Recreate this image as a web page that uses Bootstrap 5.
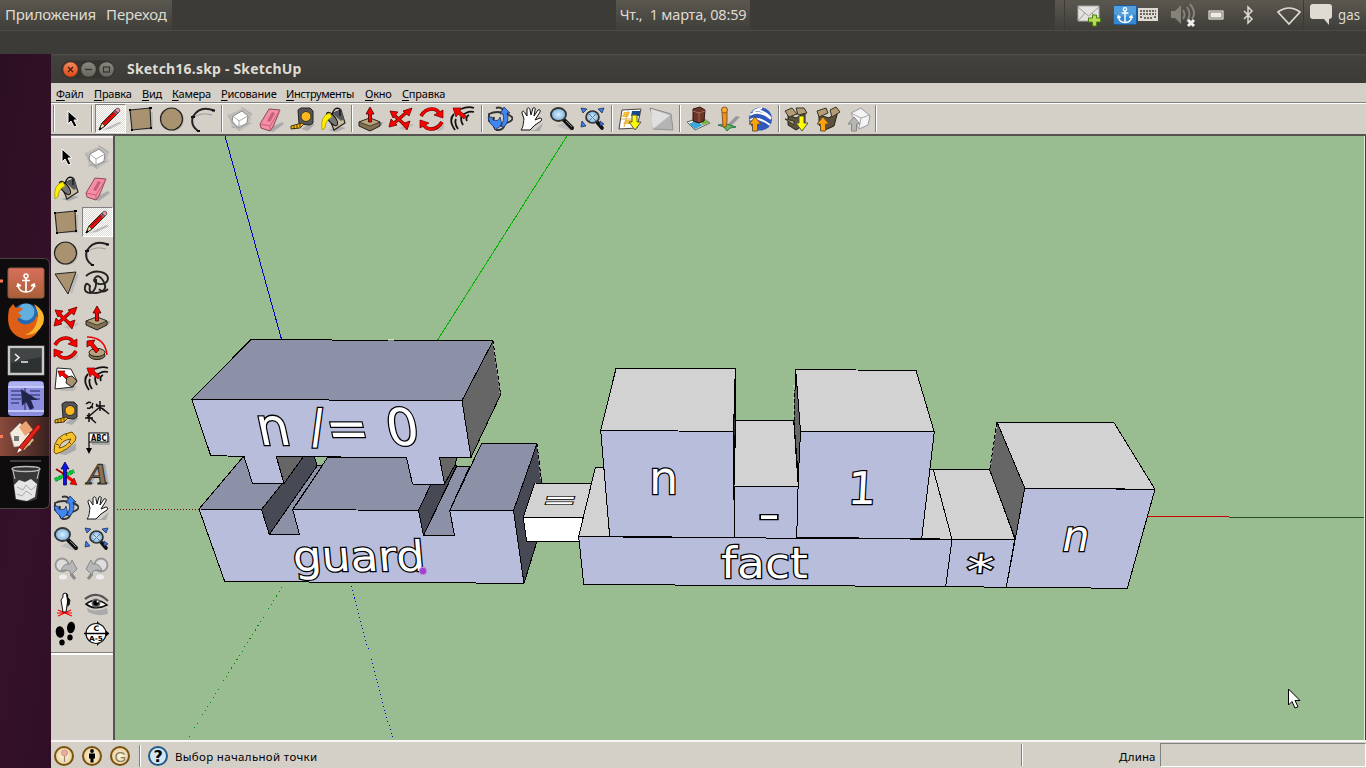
<!DOCTYPE html>
<html lang="ru">
<head>
<meta charset="utf-8">
<title>Sketch16.skp - SketchUp</title>
<link href="https://cdn.jsdelivr.net/npm/bootstrap@5.3.0/dist/css/bootstrap.min.css" rel="stylesheet">
<script src="https://cdn.jsdelivr.net/npm/bootstrap@5.3.0/dist/js/bootstrap.bundle.min.js" defer></script>
<style>
body{width:1366px;height:768px;overflow:hidden;background:#3c3b37;font-family:"Noto Sans","Open Sans",sans-serif;cursor:default}
svg{display:block;flex:none}
.panel{height:31px;background:#3c3b37;border-bottom:1px solid #4d4b46;color:#dfdbd2;font-size:15px;line-height:28px;white-space:nowrap}
.lit{background:linear-gradient(#57544c,#5a574f 5%,#403f3a 95%);height:30px}
.gapband{height:23px;background:#3c3b37}
.dockcol{width:51px;background:linear-gradient(100deg,#2c0f22,#35112a 60%,#300f26);padding-top:204px}
.dock{width:50px;height:251px;background:#0e0c0d;border:1px solid #4a4447;border-left:0;border-radius:0 6px 6px 0}
.titlebar{height:29px;background:linear-gradient(#504f4a,#42413d 8%,#3c3b37);color:#dfdbd2;font-weight:700;font-size:14px}
.menus{height:19px;background:#d4d0c8;font-size:11px;color:#000;line-height:22px;white-space:nowrap}
.menus span{flex:none;letter-spacing:-.2px}
.menus u{text-underline-offset:2px}
.tools{height:34px;background:#d4d0c8;border-top:1px solid #808080;border-bottom:2px solid #55534f;box-shadow:inset 0 1px #fff}
.cell{width:31px;height:30.5px;display:flex;align-items:center;justify-content:center;flex:none}
.cell svg{margin-left:-2px}
.pressed{background:repeating-conic-gradient(#fff 0 25%,#dcd9d2 0 50%) 0 0/2px 2px;border:1px solid;border-color:#808080 #fff #fff #808080;height:29px}
.grp .pressed{height:30px}
.vsep{width:2px;height:27px;margin:0 2px;border-left:1px solid #808080;border-right:1px solid #fff;flex:none}
.side{width:64px;background:#d4d0c8;border-right:2px solid #55534f}
.sidebox{height:519px;border-top:2px solid #f4f2ee;border-bottom:2px solid #fff;box-shadow:0 -1px #808080,inset 0 -1px #808080;padding:4px 0 0;gap:3.9px}
.grp{display:grid;grid-template-columns:31px 31px}
.status{height:28px;background:#d4d0c8;border-top:2px solid #f7f6f4;font-size:11.5px;color:#000}
.field{width:206px;height:24px;border:1px solid;border-color:#808080 #fff #fff #808080}
</style>
</head>
<body class="d-flex flex-column">
<svg width="0" height="0" class="position-absolute">
<defs>
<linearGradient id="gOr" x2="0" y2="1"><stop stop-color="#f58a63"/><stop offset="1" stop-color="#dd4814"/></linearGradient>
<linearGradient id="gGr" x2="0" y2="1"><stop stop-color="#8b8881"/><stop offset="1" stop-color="#67655e"/></linearGradient>
<radialGradient id="gLens"><stop stop-color="#d9efff"/><stop offset="1" stop-color="#79b1dc"/></radialGradient>
<radialGradient id="gCoin"><stop stop-color="#fff8e0"/><stop offset="1" stop-color="#e8cf9a"/></radialGradient>
<symbol id="arrow" viewBox="0 0 26 26"><path d="M9 5v13l3-3 3 6 3-1-3-6h4z" fill="#000" stroke="#fff" stroke-width="1"/></symbol>
<symbol id="pencil" viewBox="0 0 26 26"><path d="M5 24L22 16l3 1-12 6z" fill="#aaa" opacity=".7"/><path d="M2 24l3-7L19 3l3 3L8 20z" fill="#e8120c" stroke="#222"/><path d="M7 17L20 4" stroke="#900" stroke-width="1"/><path d="M2 24l3-7 3 3z" fill="#f3dc9b" stroke="#222" stroke-width=".8"/><path d="M2 24l1-3 2 2z" fill="#000"/><path d="M18 4l2-2q3 0 3 3l-2 2z" fill="#f28ca6" stroke="#555" stroke-width=".8"/><path d="M17 5l3 3" stroke="#779" stroke-width="1.500"/></symbol>
<symbol id="square" viewBox="0 0 26 26"><path d="M5 5l20 1v18H7z" fill="#bbb"/><path d="M2 4l20-2 1 20-19 2z" fill="#a8926f" stroke="#222" stroke-width="1.1"/><path d="M1 4h2M21 2h3M22 22h2M3 24h2" stroke="#000" stroke-width="2"/></symbol>
<symbol id="circle" viewBox="0 0 26 26"><circle cx="14" cy="14" r="11" fill="#b8b5ae"/><circle cx="12.500" cy="13" r="11" fill="#a8926f" stroke="#222" stroke-width="1.2"/></symbol>
<symbol id="arc" viewBox="0 0 26 26"><path d="M8 25Q0 19 3 10.500 10-1 24 4.500" fill="none" stroke="#222" stroke-width="2"/><path d="M4 11q8-5 18-2" fill="none" stroke="#999"/><path d="M1 11h4M22 4.500h3M7 25h3" stroke="#111" stroke-width="2"/></symbol>
<symbol id="tri" viewBox="0 0 26 26"><path d="M6 6l20-2-7 20z" fill="#bbb"/><path d="M2 4l21-2-8 22z" fill="#a8926f" stroke="#222"/></symbol>
<symbol id="free" viewBox="0 0 26 26"><path d="M2 6Q10-1 20 3c7 4 4 12-5 11q-7-2-4-6t7 1 3 9-9 5-6-7q-4-5-5 1t6 6q6-3 5-14M15 19q4 5 9 0" fill="none" stroke="#222" stroke-width="1.900"/></symbol>
<symbol id="comp" viewBox="0 0 26 26"><path d="M1 9L16 2l9 5-3 12-9 6-8-4z" fill="#aaa" opacity=".5"/><path d="M6 10l9-5 6 5-1 7-8 5-7-6z" fill="#fff" stroke="#888"/><path d="M6 10l6 5 9-5M12 15v7" fill="none" stroke="#aaa"/><path d="M1 9l12 16M4 22L25 17M14 1l11 8" stroke="#999" stroke-width=".6"/></symbol>
<symbol id="eraser" viewBox="0 0 26 26"><path d="M8 24l16-8 2 2-11 8z" fill="#aaa"/><path d="M2 18L11 3l11 1-7 17-3 4-9-3z" fill="#f58ea6" stroke="#8b4a58"/><path d="M2 18l10 2L22 4M12 20v4" fill="none" stroke="#c86078"/><path d="M9 15l5-9 3 1-5 9z" fill="#a8435a" opacity=".6"/></symbol>
<symbol id="tape" viewBox="0 0 26 26"><path d="M12 23l8-5h6l-7 7z" fill="#aaa"/><path d="M9 4l3-2h9l3 3v12l-3 2-11-1z" fill="#555" stroke="#222"/><circle cx="17" cy="10.500" r="5" fill="#fbb81b" stroke="#333"/><path d="M13 17L2 20v3l9-1 4-4z" fill="#f8b91d" stroke="#443300"/><path d="M5 20v3M8 19v3M11 18v3" stroke="#000" stroke-width=".7"/></symbol>
<symbol id="bucket" viewBox="0 0 26 26"><path d="M8 24l14-3 4 1-10 4z" fill="#aaa"/><path d="M8 9l13-5 4 13-11 7z" fill="#c9bd9e" stroke="#222" stroke-width="1.200"/><path d="M12 7l9-3 3 9-3 2z" fill="#55585c"/><ellipse cx="12" cy="13" rx="3.500" ry="8" transform="rotate(-38 12 13)" fill="#777" stroke="#111"/><path d="M10 7Q0 9 2 24l3-2q0-8 7-11z" fill="#fff000" stroke="#a59500" stroke-width=".8"/><path d="M12 9q2-9 8-6v7" fill="none" stroke="#111" stroke-width="1.300"/></symbol>
<symbol id="push" viewBox="0 0 26 26"><path d="M13 25l12-6 1-3-5 1z" fill="#999"/><path d="M2 16l11-4 10 4v4l-10 5-11-5z" fill="#82704f" stroke="#222"/><path d="M2 16l11 4 10-4-10-4z" fill="#b7a47e" stroke="#222" stroke-width=".7"/><path d="M13 1l4 7h-2.500v8h-3V8H9z" fill="#f00" stroke="#400" stroke-width=".8"/></symbol>
<symbol id="move" viewBox="0 0 26 26"><path d="M10 22l14-4 2 1-10 5z" fill="#aaa" opacity=".6"/><path d="M5 8l13 12M20 5L4 19" stroke="#600" stroke-width="3.400"/><path d="M2 5l8 1-5 6zM24 2l-3 8-6-5zM1 21l2-8 6 6zM19 24l-5-6 8-3z" fill="#f00" stroke="#600" stroke-width=".8"/><path d="M5 8l13 12M20 5L4 19" stroke="#f00" stroke-width="2"/></symbol>
<symbol id="rot" viewBox="0 0 26 26"><path d="M6 25h12l7-7v4l-4 3z" fill="#aaa" opacity=".6"/><g id="rh"><path d="M2 10Q6 3 13 3q6 0 8 6" fill="none" stroke="#600" stroke-width="3.600"/><path d="M15 9l9-5v8z" fill="#f00" stroke="#600" stroke-width=".7"/><path d="M2 10Q6 3 13 3q6 0 8 6" fill="none" stroke="#f00" stroke-width="2.400"/></g><use href="#rh" transform="rotate(180 12.500 13)"/></symbol>
<symbol id="offset" viewBox="0 0 26 26"><path d="M5 24Q-2 14 4 8M13 19Q8 10 16 7q4-2 8-1M11 3q7-3 13-1M8 23q-4-6-2-10M17 15q-2-4 2-6" fill="none" stroke="#111" stroke-width="1.800"/><path d="M3 2l8 0-1 3 6 5-2 3-6-5-2 3z" fill="#f00" stroke="#600" stroke-width=".7"/></symbol>
<symbol id="orbit" viewBox="0 0 26 26"><path d="M9 2q8-3 9 10t-8 12Q5 22 7 11M2 8q8-4 18 0t2 8q-10 5-20-1z" fill="none" stroke="#333" stroke-width="1.900"/><path d="M1 11l4 0 1 3q6 2 7-3l2 8-7 5-1-3q-5-3-6-10zM17 1l6 6h-3q3 8-3 14l-4-1q5-5 3-12h-3z" fill="#3f86f2" stroke="#124" stroke-width=".7"/></symbol>
<symbol id="hand" viewBox="0 0 26 26"><path d="M9 25l8-1 8-7-3 8z" fill="#aaa"/><path d="M3 24c3-4 2-7 3-11l-2-6c0-3 2-2 3 0l2 3V3c1-2 3-1 3 1l1 5 2-7c1-1 3 0 2 2l-1 6 4-6c1-1 3 0 2 2l-5 8 5-2c2 0 2 2 1 3l-6 4-5 5z" fill="#fff" stroke="#111"/></symbol>
<symbol id="zoomi" viewBox="0 0 26 26"><path d="M8 20l14 5 3-2-12-6z" fill="#bbb"/><path d="M15 14l8 8" stroke="#111" stroke-width="4" stroke-linecap="round"/><path d="M17 15l6 6" stroke="#888" stroke-width="1"/><ellipse cx="9.500" cy="8.500" rx="7.500" ry="6.500" fill="url(#gLens)" stroke="#333" stroke-width="1.900"/></symbol>
<symbol id="zext" viewBox="0 0 26 26"><path d="M17 16l5 6" stroke="#111" stroke-width="3.600" stroke-linecap="round"/><ellipse cx="12.500" cy="11" rx="6.500" ry="6" fill="url(#gLens)" stroke="#333" stroke-width="1.700"/><path d="M9 8l7 7M16 8l-7 7" stroke="#678"/><path d="M1 2l6 1-4 4zM24 2l-6 1 4 4zM1 21l5-1-4-5zM24 18l-4-3v5z" fill="#3f7be8" stroke="#124" stroke-width=".7"/></symbol>
<symbol id="map" viewBox="0 0 26 26"><path d="M5 4l19-1-4 19-18 1z" fill="#fff" stroke="#444"/><path d="M7 6h6l-2 5H5zM9 14h6v4H6z" fill="#f6bd38"/><path d="M11 5l-4 16M4 13h16" stroke="#ddb04e"/><path d="M15 5h8v5h-9z" fill="#174a8c"/><path d="M15 9h5v7h4l-6 8-6-8h3z" fill="#ff0" stroke="#555"/></symbol>
<symbol id="terrain" viewBox="0 0 26 26"><path d="M2 2l21 6 2 16-20-1q2-8-3-21z" fill="#c5c5c5" stroke="#888"/><path d="M3 3l20 7-18 13z" fill="#e0e0e0"/><path d="M23 8L5 23l20 1z" fill="#a9a9a9" opacity=".6"/></symbol>
<symbol id="bld" viewBox="0 0 26 26"><path d="M2 16l14-5 9 6-15 7z" fill="#e7e4dc" stroke="#666"/><path d="M4 18l6-3 8 4-8 4z" fill="#3aa9d8"/><path d="M15 15l6-2 3 4-6 2z" fill="#74b743"/><path d="M8 3l7-2 5 3-1 11-5 2-6-2z" fill="#6b3528" stroke="#311"/><path d="M14 6v10M8 5l6 2 6-2" stroke="#a76853" fill="none"/></symbol>
<symbol id="person" viewBox="0 0 26 26"><path d="M11 19l9-9 4 1-9 9z" fill="#999"/><path d="M2 19l9-1 9 3-6 1-3 3-3-4z" fill="#69b84e" stroke="#275"/><path d="M6 6h5v9l-1 6H7z" fill="#f39411" stroke="#853"/><circle cx="8.500" cy="4" r="3" fill="#ffa928" stroke="#853"/></symbol>
<symbol id="earth" viewBox="0 0 26 26"><circle cx="13.500" cy="13" r="11.500" fill="#3159bd"/><path d="M3 9q9-6 21 4M3 14q8-4 20 5M8 4q9 0 16 8M6 6q4-3 9-4" fill="none" stroke="#fff" stroke-width="1.900"/><path d="M8 11l6 7h-3.500v7h-5v-7H2z" fill="#ffa20a" stroke="#653"/></symbol>
<symbol id="boxdn" viewBox="0 0 26 26"><path d="M4 9l8 3 9-5v11l-9 6-8-5z" fill="#5c513c" stroke="#221"/><path d="M1 5l7-3 5 6-8 3zM12 2l8 0 3 5-9 2zM1 13l9 2v4z" fill="#b49c77" stroke="#332"/><path d="M15 10h5v7h4l-6 8-6-8h3z" fill="#ff0" stroke="#554"/></symbol>
<symbol id="boxup" viewBox="0 0 26 26"><path d="M4 9l10 3 9-7-4 15-9 4-6-5z" fill="#5c513c" stroke="#221"/><path d="M2 5l9-3 2 5-9 4zM15 4l6-3 4 5-8 5z" fill="#b49c77" stroke="#332"/><path d="M8 11l6 7h-3.500v7h-5v-7H2z" fill="#ffa20a" stroke="#653"/></symbol>
<symbol id="share" viewBox="0 0 26 26"><path d="M5 7l10-5 9 8-2 9-9 4z" fill="#f4f4f4" stroke="#999"/><path d="M5 7l10 5 9-3M15 12l-2 10" fill="none" stroke="#aaa"/><path d="M8 11l6 7h-3.500v7h-5v-7H2z" fill="#b5b5b5" stroke="#888"/></symbol>
<symbol id="follow" viewBox="0 0 26 26"><path d="M3 2q18 0 20 18" fill="none" stroke="#e00" stroke-width="1.500"/><ellipse cx="13" cy="20.500" rx="8" ry="4" fill="#82704f" stroke="#222"/><ellipse cx="13" cy="17.500" rx="8" ry="4" fill="#b7a47e" stroke="#222"/><path d="M3 6l8-1-2 3 6 7-3 3-6-8-3 2z" fill="#f00" stroke="#500" stroke-width=".8"/></symbol>
<symbol id="scale" viewBox="0 0 26 26"><path d="M5 22l19-2-3 5H8z" fill="#aaa" opacity=".6"/><path d="M4 2l14 1 6 12-4 6-18 2z" fill="#fff" stroke="#222"/><path d="M14 11l5-1 5 5-5 6-6-4z" fill="#a8926f" stroke="#222"/><path d="M5 5h7l-1 2 4 3-2 3-4-4-2 2z" fill="#f00" stroke="#600" stroke-width=".7"/></symbol>
<symbol id="dims" viewBox="0 0 26 26"><path d="M3 18L17 6M3 15l9 8M5 13l0 9M1 18h8M12 4l9 7M16 1v10M12 6h9M18 8l7 6" stroke="#111" stroke-width="1.500" fill="none"/><path d="M2 4q3-3 5-1M3 8q4 1 4-2M9 3q-2 4 0 5" fill="none" stroke="#111" stroke-width="1.500"/></symbol>
<symbol id="prot" viewBox="0 0 26 26"><path d="M6 24l17-11v7l-10 5z" fill="#aaa"/><path d="M1 22Q0 5 19 2l4 5-1 4Q15 20 3 24zM6 18q8-1 12-9-10 1-12 9z" fill="#f7c129" fill-rule="evenodd" stroke="#6b4c00"/><path d="M3 14l3 1M7 8l2 2M13 4l1 2M18 14l-2-2" stroke="#6b4c00"/></symbol>
<symbol id="abc" viewBox="0 0 26 26"><path d="M8 13h17V6h1v9H8z" fill="#aaa"/><path d="M5 22V3h19v9H5" fill="#fff" stroke="#000" stroke-width="1.200"/><path d="M2 18h6l-3 6z"/><text x="7" y="10.500" font-family="DejaVu Sans" font-size="8" font-weight="700" textLength="15.500" lengthAdjust="spacingAndGlyphs">ABC</text></symbol>
<symbol id="axes" viewBox="0 0 26 26"><path d="M12 14l8 6" stroke="#f00" stroke-width="3"/><path d="M24 24l-7-1 4-6z" fill="#f00" stroke="#600" stroke-width=".6"/><path d="M2 19L21 10" stroke="#063" stroke-width="4" stroke-dasharray="3 1"/><path d="M2 19L21 10" stroke="#0c3" stroke-width="2.500"/><path d="M3 8l8 5" stroke="#a00" stroke-width="2"/><path d="M12 1l4 7h-2.500v16h-3V8H8z" fill="#11e" stroke="#003" stroke-width=".7"/></symbol>
<symbol id="text3d" viewBox="0 0 26 26"><g transform="skewX(-12)"><text x="9" y="23" font-family="Liberation Serif" font-size="30" font-weight="700" fill="#aaa">A</text><text x="6" y="23" font-family="Liberation Serif" font-size="30" font-weight="700" fill="#8a7350" stroke="#222" stroke-width=".9">A</text></g></symbol>
<symbol id="zprev" viewBox="0 0 26 26"><circle cx="9" cy="9" r="6.500" fill="#ddd" stroke="#999" stroke-width="2"/><path d="M8 15q2-8 9-7l2-4 5 9-6 6-1-4q-5-2-9 0z" fill="#b7b7b7" stroke="#888"/><path d="M18 18l4 5" stroke="#888" stroke-width="3"/><ellipse cx="10" cy="21" rx="4" ry="2.500" fill="#eee"/></symbol>
<symbol id="pos" viewBox="0 0 26 26"><path d="M5 25l13-6M5 19l14 6M4 22h15" stroke="#f00" stroke-width="1.200"/><path d="M12 2q3 0 2 4l3 3-1 5-2 1-1 6h-3l-1-6-1-6 2-3q-1-4 2-4z" fill="#fff" stroke="#111"/><path d="M13 2q3 1 2 4l2 3-1 5-2 1-1 5 1-10z" fill="#111"/></symbol>
<symbol id="eye" viewBox="0 0 26 26"><path d="M3 17q8 5 20 0l1 6q-11 3-20-2z" fill="#aaa"/><path d="M1 8q12-9 23 2" fill="none" stroke="#555" stroke-width="2.200"/><path d="M2 13q10-8 21 1-12 6-21-1z" fill="#fff" stroke="#111" stroke-width="1.600"/><circle cx="12" cy="12" r="4.500" fill="#666"/><circle cx="12" cy="12" r="2.800"/><circle cx="13.500" cy="10.500" r="1" fill="#fff"/></symbol>
<symbol id="feet" viewBox="0 0 26 26"><ellipse cx="7" cy="11" rx="4.300" ry="5.800" transform="rotate(-8 7 11)"/><ellipse cx="18" cy="6.500" rx="4" ry="5.800" transform="rotate(8 18 6.500)"/><ellipse cx="9" cy="21.500" rx="2.700" ry="3"/><ellipse cx="17" cy="16.500" rx="2.700" ry="3"/></symbol>
<symbol id="sect" viewBox="0 0 26 26"><path d="M13 0l12 12.500L13 25z"/><circle cx="12" cy="12.500" r="10" fill="#fff" stroke="#111" stroke-width="1.200"/><path d="M0 12.500h25" stroke="#000" stroke-width="1.500"/><text x="9.500" y="10" font-family="DejaVu Sans" font-size="7.500" font-weight="700">C</text><text x="5" y="20" font-family="DejaVu Sans" font-size="7" font-weight="700" textLength="14" lengthAdjust="spacingAndGlyphs">A-5</text></symbol>
<symbol id="anch" viewBox="0 0 24 24"><path d="M12 7v14M8 9.500h8M4 14q1 7 8 7t8-7M3 16l1-3 3 2M21 16l-1-3-3 2" fill="none" stroke="#fff" stroke-width="1.700"/><circle cx="12" cy="5" r="2" fill="none" stroke="#fff" stroke-width="1.500"/></symbol>
</defs></svg>

<header class="panel d-flex">
  <nav class="lit d-flex" style="width:172px"><span style="margin-left:5px;width:101px;letter-spacing:-.25px">Приложения</span><span style="letter-spacing:-.1px">Переход</span></nav>
  <div class="lit text-center" style="width:134px;margin-left:444px;font-size:14.500px;letter-spacing:-.2px;white-space:pre">Чт.,  1 марта, 08:59</div>
  <div style="width:305px"></div>
  <div class="lit d-flex flex-grow-1">
    <svg width="311" height="30" viewBox="1055 0 311 30">
      <path d="M1064.500 0v30" stroke="#3c3b37"/>
      <path d="M1078 6h21v15h-21z" fill="#e5e3df" stroke="#aaa"/><path d="M1078 7l10.500 9L1099 7M1078 21l7-8M1099 21l-7-8" fill="none" stroke="#999"/><path d="M1092 15h4v3h4v4h-4v4h-4v-4h-4v-4h4z" fill="#b8dd55" stroke="#4d7d12" transform="translate(.5 0)"/>
      <rect x="1113.500" y="5.500" width="23" height="19" rx="1" fill="#3587cf" stroke="#1c5a9c"/><path d="M1114 6h22v8q-11 6-22 0z" fill="#70b5ea" opacity=".5"/><use href="#anch" x="1115" y="5" width="20" height="20"/>
      <rect x="1138" y="8" width="20" height="13" fill="#dfdbd2"/><path d="M1140 11h16M1140 14h16M1140 17h2M1144 18h8M1154 17h2" stroke="#45443f" stroke-width="1.700" stroke-dasharray="2 1"/>
      <path d="M1171 11h4l6-6v19l-6-6h-4z" fill="#85827a"/><path d="M1183 10q3 5 0 9M1187 7q5 7 0 14M1190 4q7 8 2 15" stroke="#85827a" stroke-width="2" fill="none"/><path d="M1188 20l6 6M1194 20l-6 6" stroke="#eee" stroke-width="3"/>
      <rect x="1208.500" y="10.500" width="15" height="9" rx="1" fill="#dfdbd2" stroke="#a9a69e"/><path d="M1210 12h12v6h-12z" fill="#eeeae2" stroke="#55534c" stroke-width=".7"/>
      <path d="M1244 11l8 8-4 4V7l4 4-8 8" fill="none" stroke="#dfdbd2" stroke-width="1.500"/>
      <path d="M1278 12q11-8 22 0l-11 12z" fill="none" stroke="#dfdbd2" stroke-width="1.600"/>
      <path d="M1313 4h16q3 0 3 3v9q0 3-3 3v6l-5-6h-11q-3 0-3-3V7q0-3 3-3z" fill="#dfdbd2"/>
      <path d="M1303.500 0v30" stroke="#3c3b37"/>
      <text x="1338" y="20" font-size="15" fill="#dfdbd2" textLength="22" lengthAdjust="spacingAndGlyphs">gas</text>
    </svg>
  </div>
</header>
<div class="gapband"></div>
<main class="d-flex flex-grow-1">
  <aside class="dockcol flex-shrink-0"><div class="dock">
    <svg width="49" height="249" viewBox="0 259 49 249">
      <defs><linearGradient id="gAn" x2="0" y2="1"><stop stop-color="#d96f5d"/><stop offset="1" stop-color="#a96037"/></linearGradient><linearGradient id="gSk"><stop stop-color="#8a4b3c"/><stop offset="1" stop-color="#38221f"/></linearGradient></defs>
      <rect x="8" y="268" width="36" height="30" rx="2" fill="url(#gAn)" stroke="#8d5b42"/><use href="#anch" x="14" y="271" width="24" height="24"/>
      <path d="M0 279.500h3v3H0z" fill="#ff7c55"/>
      <circle cx="26" cy="318.500" r="15" fill="#2468b4"/><circle cx="26" cy="312" r="8.500" fill="#6fc0ea" opacity=".8"/><path d="M9 309l4-5 3 4q5-2 7 1l-5 4 4 3-5 3q4 7 11 5 7-2 8-8 5 2 5 6-3 17-17 17Q4 334 9 309z" fill="#e05f16"/><path d="M34 304q13 8 9 20-6 12-18 11 10-4 12-14 3-8-3-17z" fill="#f9b52b"/>
      <rect x="9" y="347" width="34" height="27" fill="#2e3131" stroke="#c8c8c8" stroke-width="2.500"/><path d="M11 349h30v8l-30 6z" fill="#4b4e4e" opacity=".7"/><path d="M15 354l4 3.500-4 3.500M21 362h7" fill="none" stroke="#eee" stroke-width="1.600"/>
      <rect x="8" y="381" width="36" height="35" rx="4" fill="#8b8ddf"/><path d="M8 387h36M8 411h36" stroke="#c6c8f5" stroke-width="2"/><path d="M25 388v22M11 391h10M11 395h10M11 399h10M11 403h8M30 391h10M30 395h10M34 399h6" stroke="#464889" stroke-width="1.500"/><path d="M21 389l1 17 4-4 4 8 4-2-3-8h7z" fill="#22244b"/><path d="M9 382h34v4H9z" fill="#aeb0ef"/>
      <rect x="0" y="417" width="49" height="39" fill="url(#gSk)"/><path d="M0 435h3v3H0z" fill="#ff7c55"/><path d="M10 433l10-10 12 13-2 9-16 2z" fill="#f4eadd" stroke="#999" stroke-width=".6"/><path d="M19 427l7-6 7 9-8 6z" fill="#eda274"/><path d="M14 436h5v5h-5z" fill="#777"/><path d="M23 449l10-10" stroke="#d9b27d" stroke-width="3"/><path d="M17 453l3-7 18-22 3 3-18 22z" fill="#e02218" stroke="#711"/><path d="M17 453l2-5 3 2z" fill="#fff"/>
      <path d="M10 461h31" stroke="#777"/>
      <path d="M12 469l3 30q11 5 22 0l3-30z" fill="#6e7170" opacity=".45"/><ellipse cx="26" cy="469" rx="14" ry="2.500" fill="#333" stroke="#bbb" stroke-width="1.300"/><path d="M14 485l5-5 6 2 6-3 6 5-2 13-8 4-11-2z" fill="#e5e5e5"/><path d="M17 487l6 3 3-5 5 5 5-4M17 494l5 2 4-5 6 4" stroke="#aaa" fill="none"/><path d="M13 471l2 8M39 471l-2 8" stroke="#ccc"/>
    </svg></div></aside>
  <section class="d-flex flex-column flex-grow-1">
    <div class="titlebar d-flex align-items-center">
      <svg width="76" height="28" viewBox="51 54 76 28"><rect x="61" y="59.500" width="54" height="18" rx="9" fill="#35342f"/><circle cx="70.500" cy="68.500" r="7.500" fill="url(#gOr)" stroke="#7a2d12" stroke-width=".6"/><path d="M68 66l5 5M73 66l-5 5" stroke="#4b1b0b" stroke-width="1.300"/><circle cx="88.500" cy="68.500" r="7.300" fill="url(#gGr)"/><path d="M85 68.500h7" stroke="#35342f" stroke-width="1.300"/><circle cx="106.500" cy="68.500" r="7.300" fill="url(#gGr)"/><rect x="103.500" y="66" width="6" height="5" fill="none" stroke="#35342f" stroke-width="1.200"/></svg>
      <span style="letter-spacing:.2px">Sketch16.skp - SketchUp</span>
    </div>
    <div class="menus d-flex">
      <span style="margin-left:5px;width:38px"><u>Ф</u>айл</span><span style="width:48px"><u>П</u>равка</span><span style="width:30px"><u>В</u>ид</span><span style="width:49px"><u>К</u>амера</span><span style="width:65px"><u>Р</u>исование</span><span style="width:79px;letter-spacing:-.4px"><u>И</u>нструменты</span><span style="width:37px"><u>О</u>кно</span><span><u>С</u>правка</span>
    </div>
    <div class="tools d-flex align-items-center">
      <div class="vsep" style="margin:0 0 0 2px"></div><div class="cell" style="margin-left:2px"><svg width="26" height="26"><use href="#arrow"/></svg></div>
      <div class="vsep" style="margin:0 2px 0 3px"></div>
      <div class="cell pressed"><svg width="26" height="26"><use href="#pencil"/></svg></div><div class="cell"><svg width="26" height="26"><use href="#square"/></svg></div><div class="cell"><svg width="26" height="26"><use href="#circle"/></svg></div><div class="cell"><svg width="26" height="26"><use href="#arc"/></svg></div>
      <div class="vsep"></div>
      <div class="cell"><svg width="26" height="26"><use href="#comp"/></svg></div><div class="cell"><svg width="26" height="26"><use href="#eraser"/></svg></div><div class="cell"><svg width="26" height="26"><use href="#tape"/></svg></div><div class="cell"><svg width="26" height="26"><use href="#bucket"/></svg></div>
      <div class="vsep"></div>
      <div class="cell"><svg width="26" height="26"><use href="#push"/></svg></div><div class="cell"><svg width="26" height="26"><use href="#move"/></svg></div><div class="cell"><svg width="26" height="26"><use href="#rot"/></svg></div><div class="cell"><svg width="26" height="26"><use href="#offset"/></svg></div>
      <div class="vsep"></div>
      <div class="cell"><svg width="26" height="26"><use href="#orbit"/></svg></div><div class="cell"><svg width="26" height="26"><use href="#hand"/></svg></div><div class="cell"><svg width="26" height="26"><use href="#zoomi"/></svg></div><div class="cell"><svg width="26" height="26"><use href="#zext"/></svg></div>
      <div class="vsep"></div>
      <div class="cell"><svg width="26" height="26"><use href="#map"/></svg></div><div class="cell"><svg width="26" height="26"><use href="#terrain"/></svg></div>
      <div class="vsep"></div>
      <div class="cell"><svg width="26" height="26"><use href="#bld"/></svg></div><div class="cell"><svg width="26" height="26"><use href="#person"/></svg></div><div class="cell"><svg width="26" height="26"><use href="#earth"/></svg></div>
      <div class="vsep"></div>
      <div class="cell"><svg width="26" height="26"><use href="#boxdn"/></svg></div><div class="cell"><svg width="26" height="26"><use href="#boxup"/></svg></div><div class="cell"><svg width="26" height="26"><use href="#share"/></svg></div>
      <div class="vsep" style="margin:0"></div>
    </div>
    <div class="d-flex" style="height:604px">
      <div class="side flex-shrink-0"><div class="sidebox d-flex flex-column">
        <div class="grp"><div class="cell"><svg width="26" height="26"><use href="#arrow"/></svg></div><div class="cell"><svg width="26" height="26"><use href="#comp"/></svg></div><div class="cell"><svg width="26" height="26"><use href="#bucket"/></svg></div><div class="cell"><svg width="26" height="26"><use href="#eraser"/></svg></div></div>
        <div class="grp"><div class="cell"><svg width="26" height="26"><use href="#square"/></svg></div><div class="cell pressed"><svg width="26" height="26"><use href="#pencil"/></svg></div><div class="cell"><svg width="26" height="26"><use href="#circle"/></svg></div><div class="cell"><svg width="26" height="26"><use href="#arc"/></svg></div><div class="cell"><svg width="26" height="26"><use href="#tri"/></svg></div><div class="cell"><svg width="26" height="26"><use href="#free"/></svg></div></div>
        <div class="grp"><div class="cell"><svg width="26" height="26"><use href="#move"/></svg></div><div class="cell"><svg width="26" height="26"><use href="#push"/></svg></div><div class="cell"><svg width="26" height="26"><use href="#rot"/></svg></div><div class="cell"><svg width="26" height="26"><use href="#follow"/></svg></div><div class="cell"><svg width="26" height="26"><use href="#scale"/></svg></div><div class="cell"><svg width="26" height="26"><use href="#offset"/></svg></div></div>
        <div class="grp"><div class="cell"><svg width="26" height="26"><use href="#tape"/></svg></div><div class="cell"><svg width="26" height="26"><use href="#dims"/></svg></div><div class="cell"><svg width="26" height="26"><use href="#prot"/></svg></div><div class="cell"><svg width="26" height="26"><use href="#abc"/></svg></div><div class="cell"><svg width="26" height="26"><use href="#axes"/></svg></div><div class="cell"><svg width="26" height="26"><use href="#text3d"/></svg></div></div>
        <div class="grp"><div class="cell"><svg width="26" height="26"><use href="#orbit"/></svg></div><div class="cell"><svg width="26" height="26"><use href="#hand"/></svg></div><div class="cell"><svg width="26" height="26"><use href="#zoomi"/></svg></div><div class="cell"><svg width="26" height="26"><use href="#zext"/></svg></div><div class="cell"><svg width="26" height="26"><use href="#zprev"/></svg></div><div class="cell"><svg width="26" height="26"><use href="#zprev" transform="translate(26 0) scale(-1 1)"/></svg></div></div>
        <div class="grp"><div class="cell"><svg width="26" height="26"><use href="#pos"/></svg></div><div class="cell"><svg width="26" height="26"><use href="#eye"/></svg></div><div class="cell"><svg width="26" height="26"><use href="#feet"/></svg></div><div class="cell"><svg width="26" height="26"><use href="#sect"/></svg></div></div>
      </div></div>
      <svg width="1250" height="604" viewBox="115 136 1250 604" style="background:#9abc91">
        <g fill="none" shape-rendering="crispEdges">
          <path d="M225 136L317 467" stroke="#0000c8"/><path d="M567 136L437 341" stroke="#00b400"/>
          <path d="M117 509.500h82" stroke="#700" stroke-dasharray="1 2"/><path d="M282 587L187 740" stroke="#080" stroke-dasharray="1 4"/><path d="M351 586L393 740" stroke="#00c" stroke-dasharray="1 3"/>
          <path d="M1148 516.500h81" stroke="#c80000"/><path d="M1229 517.500h136" stroke="#24501f"/>
        </g>
        <g stroke="#000" stroke-width="1" stroke-linejoin="round" shape-rendering="crispEdges">
          <!-- guard base -->
          <path d="M199 509L243 457H304L261.500 509.500z" fill="#8d91a8"/>
          <path d="M269.300 534.500L299.500 534.500 292.700 509.500 322.700 465.700H316.700z" fill="#8d91a8"/>
          <path d="M292.700 509.500L327.700 457.300 444 457 418.500 510.500z" fill="#8d91a8"/>
          <path d="M261.500 509.500L304 456H314.300L317 466 269.300 534.500z" fill="#474955"/>
          <path d="M296 505L322 466" fill="none"/>
          <path d="M423.500 535.500H454.500L449.700 510.500 469.700 466.300H456.700z" fill="#8d91a8"/>
          <path d="M418.500 510.500L431 484 440 465 455 464 456.500 466 423.500 535.500z" fill="#474955"/>
          <path d="M449.700 510.500L481.700 443.300 537 443.700 513.500 510.700z" fill="#8d91a8"/>
          <path d="M513.500 510.700L537 443.700 541.700 482.500 536.700 542 524 583.300z" fill="#474955"/>
          <path d="M199 509L261.500 509.500 269.300 534.500H299.500L292.700 509.500 418.500 510.500 423.500 535.500H454.500L449.700 510.500 513.500 510.700 524 583.300 224.700 581.500z" fill="#b9bddc"/>
          <!-- condition block -->
          <path d="M276.300 456.500H303.500L284 483.500z" fill="#666"/><path d="M439.500 457.500H456.500L455.500 464 444.500 484z" fill="#666"/>
          <path d="M251 339.500L493 341 462 400.500 191.700 399.500z" fill="#8d91a8"/>
          <path d="M493 341L500.700 394.500 471 457.500 462 400.500z" fill="#666"/>
          <path d="M191.700 399.500L462 400.500 471 457.500H439.500L444.500 484H412.500L406.500 457.500 276.300 456.500 284 483.500H252.500L244 456.500 210.700 455.500z" fill="#b9bddc"/>
          <!-- equals connector -->
          <path d="M534.700 483L591.700 484 583 517.500H523.300z" fill="#d2d2d2"/><path d="M523.300 517.500H583L579.300 541.500H526.700z" fill="#fff"/>
          <!-- fact base -->
          <path d="M595.300 467.500H604L610 536.500H578.700z" fill="#d2d2d2"/>
          <path d="M930 469.500H933.300L952 539.300 921 538.500z" fill="#d2d2d2"/>
          <path d="M933.300 469.500H990L1015 539.300H952z" fill="#d2d2d2"/>
          <path d="M735.500 420.500H793.700L798.300 486.500H734z" fill="#d2d2d2"/>
          <path d="M734 486.500H798.300L796.700 538H734z" fill="#b9bddc"/>
          <path d="M616 368.500L735.300 368.700 733.500 431.500 600.700 430.300z" fill="#d2d2d2"/>
          <path d="M600.700 430.300L733.500 431.500 734.300 537.500 609.700 536.500z" fill="#b9bddc"/>
          <path d="M735.500 380V448L733.500 431z" fill="#333"/>
          <path d="M795.700 369.500L800.500 431.500 798.300 478 794 421.700z" fill="#666"/>
          <path d="M795.700 369.500L916 370.500 934.300 432 800.500 431.500z" fill="#d2d2d2"/>
          <path d="M800.500 431.500L934.300 432 921.700 538.500 796.700 537.500 798.300 478z" fill="#b9bddc"/>
          <path d="M578.700 536.700L952 539.300 945.700 586.500 583.700 584.500z" fill="#b9bddc"/>
          <path d="M952 539.300H1014.700L1006.300 587.300 945.700 586.500z" fill="#b9bddc"/>
          <path d="M997 422L1024.700 488 1015.300 539 989.700 470z" fill="#666"/>
          <path d="M997 422L1114 422.700 1155 489.300 1024.700 488z" fill="#d2d2d2"/>
          <path d="M1024.700 488.300L1155 489.300 1127.300 588.300 1006.300 587.300z" fill="#b9bddc"/>
        </g>
        <path d="M388 340h6" stroke="#fff"/><path d="M493.500 344L500 393M537.500 447L541 481M794 385V420M996.500 427L990 468" stroke="#fff" stroke-dasharray="2 4" fill="none" stroke-width=".8"/>
        <g font-family="DejaVu Sans" fill="#fff" stroke="#000" stroke-width="2.500" paint-order="stroke" stroke-linejoin="miter">
          <g font-size="52"><text transform="translate(260 445) skewX(12)">n</text><text transform="translate(312 443) skewX(10)" font-size="48">/</text><text transform="translate(330 446) skewX(12)" textLength="42" lengthAdjust="spacingAndGlyphs">=</text><text transform="translate(389 445) skewX(9)" font-size="51">0</text></g>
          <text transform="translate(294 571) skewX(5)" font-size="42" textLength="132" lengthAdjust="spacingAndGlyphs">guard</text>
          <text x="721" y="578" font-size="42" textLength="87" lengthAdjust="spacingAndGlyphs">fact</text>
          <text x="649" y="494" font-size="46">n</text>
          <text x="758" y="530" font-size="46" textLength="22" lengthAdjust="spacingAndGlyphs">-</text>
          <text transform="translate(847 504) skewX(-3)" font-size="45">1</text>
          <text transform="translate(965 585) skewX(-5) scale(1.300 1)" font-size="42">*</text>
          <text transform="translate(1060 551) skewX(-11)" font-size="43">n</text>
          <text transform="translate(540 509) skewX(-16) scale(1 .75)" font-size="36" stroke-width="2" textLength="35" lengthAdjust="spacingAndGlyphs">=</text>
        </g>
        <circle cx="423" cy="571" r="3.700" fill="#a13fd0" stroke="#c58be0"/>
        <path d="M1288.500 689v16l3.500-3.500 3 6.500 3-1.200-3-6.300h5z" fill="#fff" stroke="#000"/>
        <path d="M1364.500 136v604" stroke="#e8e6e1"/>
      </svg>
    </div>
    <footer class="status d-flex align-items-center">
      <svg width="124" height="26" viewBox="51 742 124 26"><g fill="url(#gCoin)" stroke="#7a5010" stroke-width="2"><circle cx="64" cy="756" r="9"/><circle cx="92" cy="756" r="9"/><circle cx="120" cy="756" r="9"/></g><circle cx="64.500" cy="753" r="3" fill="#f2a9a0" stroke="#c98"/><path d="M64.500 756v6" stroke="#987" stroke-width="1.300"/><circle cx="92" cy="751" r="1.900"/><path d="M89 753.500h6v5h-1.500v4h-3v-4H89z"/><text x="114.500" y="761.500" font-family="Liberation Sans" font-size="15" fill="#887c60">G</text><path d="M139.500 745v22" stroke="#808080"/><path d="M140.500 745v22" stroke="#fff"/><circle cx="158" cy="756" r="9" fill="#cfe6f5" stroke="#235a85" stroke-width="2"/><text x="153.500" y="762" font-family="DejaVu Sans" font-weight="700" font-size="16">?</text></svg>
      <span class="flex-grow-1 pt-1" style="letter-spacing:.33px">Выбор начальной точки</span>
      <div class="vsep" style="margin:0 96px 0 0;height:22px"></div><span class="pt-1" style="width:41px;letter-spacing:.1px">Длина</span><div class="field"></div>
    </footer>
  </section>
</main>
</body>
</html>
